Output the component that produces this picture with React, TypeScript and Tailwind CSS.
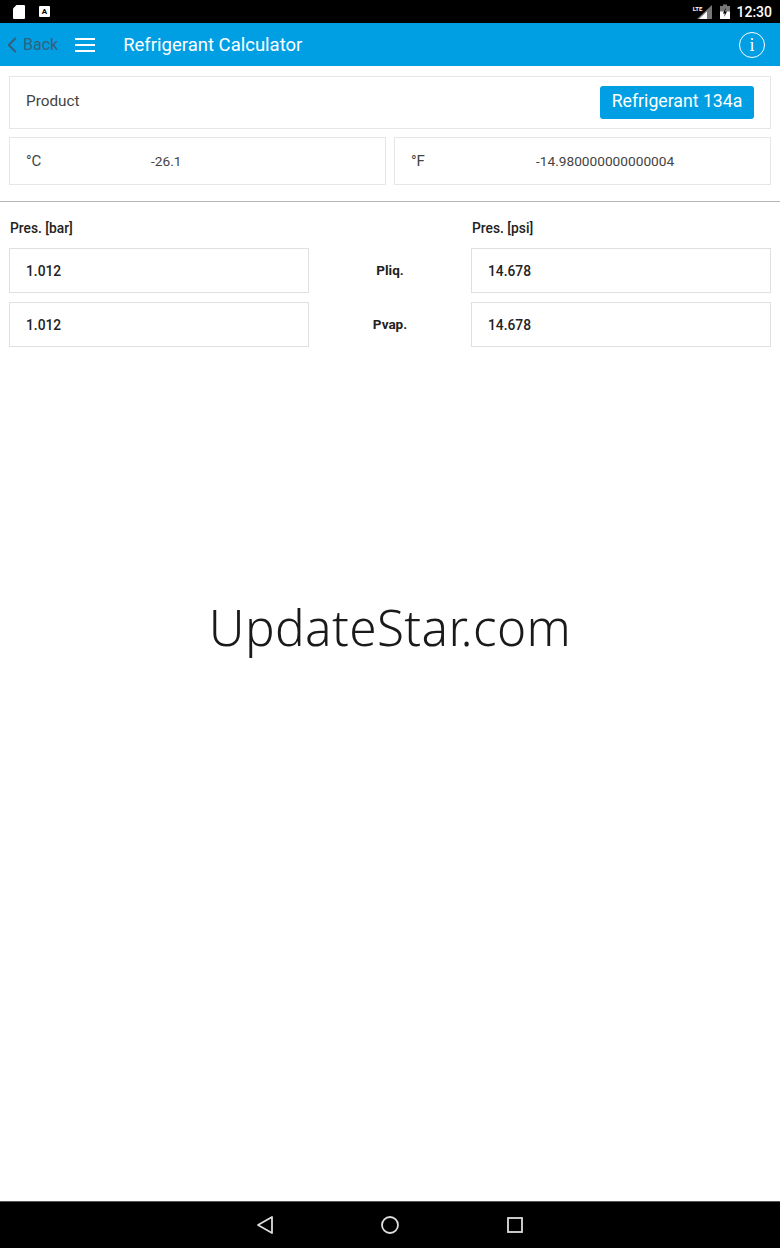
import { ChevronLeft } from 'lucide-react';

const roboto = 'font-["Roboto",sans-serif]';

function ValueBox({ value }: { value: string }) {
  return (
    <div className="flex h-[45px] items-center border border-[#e0e0e0] pl-[16px] pt-[1px] text-[13.8px] font-medium text-[#222]">
      {value}
    </div>
  );
}

function StatusBar() {
  return (
    <div className="flex h-[23px] items-center bg-black pl-[13px] pr-[8px]">
      <svg width="12" height="14" viewBox="0 0 12 14">
        <path d="M3.500 0h7.500a1 1 0 0 1 1 1v12a1 1 0 0 1-1 1h-10a1 1 0 0 1-1-1v-9.500z" fill="#fff" />
      </svg>
      <div className="ml-[14px] flex h-[11px] w-[11px] items-center justify-center rounded-[1px] bg-white text-[8px] leading-none font-bold text-black">
        A
      </div>
      <div className="ml-auto flex items-center">
        <span className="mb-[6px] text-[6px] leading-none font-bold text-white">LTE</span>
        <svg width="15" height="14" viewBox="0 0 15 14" className="-ml-[5px]">
          <path d="M0 14L15 0v14z" fill="#777" />
          <path d="M2 14L10 6.500V14z" fill="#fff" />
        </svg>
        <svg width="10" height="15" viewBox="0 0 10 15" className="ml-[8px]">
          <path d="M3 0.500h4v1.500h3v13h-10v-13h3z" fill="#777" />
          <path d="M0 7.500h10v7.500h-10z" fill="#fff" />
          <path d="M5.800 3.500L3 9.500h1.800l-.6 3.500L7 7.500H5.100z" fill="#000" />
        </svg>
        <span className="ml-[6px] text-[14px] leading-none font-medium text-white">12:30</span>
      </div>
    </div>
  );
}

function Header() {
  return (
    <div className="flex h-[43px] items-center bg-[#009fe3] pr-[15px]">
      <ChevronLeft size={26} strokeWidth={1.800} className="-ml-[1px] text-[#33617c]" />
      <span className="-ml-[2px] text-[16px] text-[#33617c]">Back</span>
      <div className="ml-[17px] flex w-[20px] flex-col gap-[4px]">
        <div className="h-[2px] bg-white" />
        <div className="h-[2px] bg-white" />
        <div className="h-[2px] bg-white" />
      </div>
      <span className="ml-[28px] pt-[2px] text-[18.500px] text-white">Refrigerant Calculator</span>
      <div className="ml-auto flex h-[26px] w-[26px] items-center justify-center rounded-full border-[1.5px] border-white font-['Liberation_Serif',serif] text-[18px] leading-none text-white">
        i
      </div>
    </div>
  );
}

function NavBar() {
  return (
    <div className="flex h-[47px] items-center justify-center gap-[105px] border-t border-[#555] bg-black">
      <svg width="20" height="20" viewBox="0 0 20 20" fill="none" stroke="#ddd" strokeWidth="1.800" strokeLinejoin="round">
        <path d="M17 2v16L3 10z" />
      </svg>
      <svg width="20" height="20" viewBox="0 0 20 20" fill="none" stroke="#ddd" strokeWidth="1.800">
        <circle cx="10" cy="10" r="8" />
      </svg>
      <svg width="20" height="20" viewBox="0 0 20 20" fill="none" stroke="#ddd" strokeWidth="1.800">
        <rect x="3" y="3" width="14" height="14" />
      </svg>
    </div>
  );
}

export default function App() {
  return (
    <div className={`relative flex h-[1248px] w-[780px] flex-col bg-white ${roboto}`}>
      <StatusBar />
      <Header />

      <div className="flex-1">
        <div className="px-[9px] pt-[10px]">
          <div className="flex h-[53px] items-center justify-between border border-[#e6e6e6] pb-[1px] pl-[16px] pr-[16px]">
            <span className="mb-[1px] text-[15.300px] text-[#444]">Product</span>
            <div className="flex h-[33px] w-[154px] items-center justify-center rounded-[3px] bg-[#009fe3] pb-[2px] text-[17.700px] text-white">
              Refrigerant 134a
            </div>
          </div>

          <div className="mt-[8px] grid grid-cols-2 gap-[8px]">
            <div className="flex h-[48px] items-center border border-[#e6e6e6] pl-[16px] pt-[1px] text-[#444]">
              <span className="w-[125px] text-[15px]">°C</span>
              <span className="text-[13.700px]">-26.1</span>
            </div>
            <div className="flex h-[48px] items-center border border-[#e6e6e6] pl-[16px] pt-[1px] text-[#444]">
              <span className="w-[125px] text-[15px]">°F</span>
              <span className="text-[13.700px]">-14.980000000000004</span>
            </div>
          </div>
        </div>

        <div className="mt-[16px] h-[1px] bg-[#b5b5b5]" />

        <div className="mt-[18px] grid grid-cols-[300px_162px_300px] px-[9px]">
          <div className="flex h-[28px] items-start pl-[1px] text-[13.800px] leading-[16px] font-medium text-[#222]">Pres. [bar]</div>
          <div />
          <div className="flex h-[28px] items-start pl-[1px] text-[13.800px] leading-[16px] font-medium text-[#222]">Pres. [psi]</div>

          <ValueBox value="1.012" />
          <div className="flex items-center justify-center text-[13.500px] font-bold text-[#222]">Pliq.</div>
          <ValueBox value="14.678" />

          <div className="col-span-3 h-[9px]" />

          <ValueBox value="1.012" />
          <div className="flex items-center justify-center text-[13.500px] font-bold text-[#222]">Pvap.</div>
          <ValueBox value="14.678" />
        </div>
      </div>

      <NavBar />

      <div className="absolute top-[593px] left-0 w-full text-center font-['Noto_Sans',sans-serif] text-[49.500px] leading-[68px] font-light tracking-[0.4px] text-[#1a1a1a]">
        UpdateStar.com
      </div>
    </div>
  );
}
